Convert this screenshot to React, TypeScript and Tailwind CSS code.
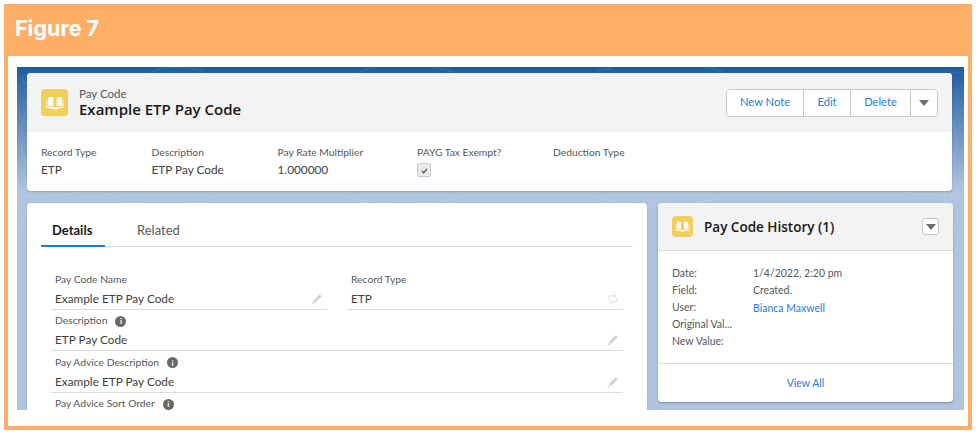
import type { ReactNode } from "react";

const sans = { fontFamily: 'Lato, "Open Sans", sans-serif' };
const heading = { fontFamily: '"Open Sans", sans-serif' };

function BookIcon({ size }: { size: number }) {
  return (
    <svg width={size} height={size} viewBox="0 0 28 28" fill="white">
      <path d="M6 7.5c1.6-.6 3.4-.6 5 0 .6.2 1 .7 1 1.3v9.2c-1.9-.8-4-.9-6-.4V7.5z" />
      <path d="M22 7.5c-1.6-.6-3.4-.6-5 0-.6.2-1 .7-1 1.3v9.2c1.9-.8 4-.9 6-.4V7.5z" />
      <path d="M4 9.5h1v9.2c3-.6 6-.3 9 .8 3-1.1 6-1.4 9-.8V9.5h1v10.4c-2.8-.4-5.4-.1-7.8.7-.2.7-.7 1.1-1.2 1.1h-2c-.5 0-1-.4-1.2-1.1-2.4-.8-5-1.1-7.8-.7V9.5z" />
    </svg>
  );
}

function Caret() {
  return (
    <svg width="10" height="6" viewBox="0 0 10 6" fill="#706e6b">
      <path d="M0 0h10L5 6z" />
    </svg>
  );
}

function Pencil() {
  return (
    <svg width="12" height="12" viewBox="0 0 12 12" fill="#d4d2d0">
      <path d="M8.7 1.2l2.1 2.1-6.9 6.9-2.1-2.1 6.9-6.9zM1.2 9L3 10.8l-2.5.7.7-2.5z" />
    </svg>
  );
}

function SwapIcon() {
  return (
    <svg width="12" height="12" viewBox="0 0 12 12" fill="none" stroke="#e8e8e8" strokeWidth="1.4">
      <path d="M2 7V3h5M7 1l2 2-2 2M10 5v4H5M5 7l-2 2 2 2" />
    </svg>
  );
}

// faint contour lines of the page background
function Contours() {
  return (
    <svg className="absolute inset-0" width="947" height="343" fill="none" stroke="white" strokeOpacity="0.1">
      <path d="M0 20c40-25 70 15 110-5s60-20 100 0 80 15 120-5 90-15 130 5 70 10 120-10 100-10 140 5 90 10 227-5" />
      <path d="M0 125c30 15 60-10 100 5s70 10 110-5 80-5 120 5 90 10 130-5 70-10 120 5 100 10 140-5 90-5 227 5" />
      <path d="M936 10c-20 30 15 50 0 80s-10 60 11 85" />
      <path d="M5 10c15 30-10 50 2 80s5 50-7 80" />
      <path d="M925 130c15 30-8 60 5 95s10 70-5 110" />
    </svg>
  );
}

function InfoDot() {
  return (
    <span className="ml-2 flex h-[11px] w-[11px] items-center justify-center rounded-full bg-[#6b6967] text-[8px] font-bold leading-none text-white">
      i
    </span>
  );
}

function Highlight({ label, value, width, check }: { label: string; value?: string; width: string; check?: boolean }) {
  return (
    <div className={width}>
      <div className="text-[10.3px] leading-[14px] text-[#54585c]">{label}</div>
      {value && <div className="mt-[2px] text-[11.8px] leading-[18px] text-[#3e3e3c]">{value}</div>}
      {check && (
        <div className="mt-[4px] flex h-[14px] w-[14px] items-center justify-center rounded-[2px] border border-[#c9c7c5] bg-[#ecebea]">
          <svg width="9" height="9" viewBox="0 0 10 10" fill="none" stroke="#706e6b" strokeWidth="1.8">
            <path d="M2 5.5l2 2 4-4.5" />
          </svg>
        </div>
      )}
    </div>
  );
}

function Field({ label, value, info, icon, wide }: { label: string; value?: string; info?: boolean; icon?: ReactNode; wide?: boolean }) {
  return (
    <div className={wide ? "col-span-2" : ""}>
      <div className="h-[41.5px] border-b border-[#dddbda] px-1">
        <div className="flex h-[20px] items-center pt-[3px] text-[10.3px] text-[#54585c]">
          {label}
          {info && <InfoDot />}
        </div>
        {value && (
          <div className="flex h-[21px] items-center justify-between text-[11.8px] text-[#3e3e3c]">
            {value}
            {icon}
          </div>
        )}
      </div>
    </div>
  );
}

function HistoryRow({ label, children }: { label: string; children?: ReactNode }) {
  return (
    <div className="flex h-[17px] items-center text-[10.5px] text-[#54585c]">
      <div className="w-[81px] truncate">{label}</div>
      <div>{children}</div>
    </div>
  );
}

export default function App() {
  return (
    <div className="h-[434px] w-[976px] overflow-hidden bg-white pl-1 pt-1" style={sans}>
      <div className="h-[426px] w-[968px] border-x-4 border-b-4 border-[#ffae68] bg-white">
        <div className="-mx-1 flex h-[52px] items-center bg-[#ffae68] pb-1 pl-[11px] text-[21.5px] font-bold text-white" style={{ fontFamily: "Inter, sans-serif" }}>
          Figure 7
        </div>
        <div className="pl-[9px] pt-[11px]">
          <div className="relative h-[343px] w-[947px] overflow-hidden bg-gradient-to-b from-[#1a5c9f] from-0% via-[#b0c4df] via-[36%] to-[#b0c4df] pl-[10px] pt-[6px]">
            <Contours />
            <div className="relative w-[925px] overflow-hidden rounded bg-white shadow-[0_1px_2px_rgba(0,0,0,0.2)]">
              <div className="flex h-[59px] items-center justify-between bg-[#f3f3f3] pl-[14px] pr-[14px]">
                <div className="flex items-center gap-[11px]">
                  <div className="flex h-[27px] w-[27px] items-center justify-center rounded bg-[#f2cf5b]">
                    <BookIcon size={24} />
                  </div>
                  <div>
                    <div className="text-[11.5px] leading-[13px] text-[#54585c]">Pay Code</div>
                    <div className="text-[15px] font-semibold leading-[18px] text-[#181818]" style={heading}>Example ETP Pay Code</div>
                  </div>
                </div>
                <div className="flex h-[28px] items-center rounded border border-[#c9c7c5] bg-white text-[11.2px] text-[#1b7ddb]">
                  <div className="flex h-full w-[77px] items-center justify-center border-r border-[#c9c7c5]">New Note</div>
                  <div className="flex h-full w-[47px] items-center justify-center border-r border-[#c9c7c5]">Edit</div>
                  <div className="flex h-full w-[60px] items-center justify-center border-r border-[#c9c7c5]">Delete</div>
                  <div className="flex h-full w-[26px] items-center justify-center"><Caret /></div>
                </div>
              </div>
              <div className="flex h-[59px] pl-[14px] pt-[13px]">
                <Highlight label="Record Type" value="ETP" width="w-[110.5px]" />
                <Highlight label="Description" value="ETP Pay Code" width="w-[126px]" />
                <Highlight label="Pay Rate Multiplier" value="1.000000" width="w-[139.5px]" />
                <Highlight label="PAYG Tax Exempt?" width="w-[136px]" check />
                <Highlight label="Deduction Type" width="w-[100px]" />
              </div>
            </div>
            <div className="relative mt-3 flex items-start gap-[11px]">
              <div className="h-[220px] w-[620px] rounded bg-white px-[14px] pt-[11px] shadow-[0_1px_2px_rgba(0,0,0,0.2)]">
                <div className="flex h-[33px] w-[592px] border-b border-[#dddbda] text-[13px]">
                  <div className="h-[33px] w-[64px] border-b-2 border-[#1b7ddb] pl-[11px] pt-[7px] font-bold text-[#181818]">Details</div>
                  <div className="pl-[32px] pt-[7px] text-[#54585c]">Related</div>
                </div>
                <div className="mt-[21px] grid w-[582px] grid-cols-[276px_276px] gap-x-5 pl-[10px]">
                  <Field label="Pay Code Name" value="Example ETP Pay Code" icon={<Pencil />} />
                  <Field label="Record Type" value="ETP" icon={<SwapIcon />} />
                  <Field label="Description" value="ETP Pay Code" info wide icon={<Pencil />} />
                  <Field label="Pay Advice Description" value="Example ETP Pay Code" info wide icon={<Pencil />} />
                  <Field label="Pay Advice Sort Order" info wide />
                </div>
              </div>
              <div className="h-[199px] w-[295px] overflow-hidden rounded bg-white shadow-[0_1px_2px_rgba(0,0,0,0.3)]">
                <div className="flex h-[48px] items-center justify-between border-b border-[#dddbda] bg-[#f3f3f3] pl-[14px] pr-[14px]">
                  <div className="flex items-center gap-[11px]">
                    <div className="flex h-[21px] w-[21px] items-center justify-center rounded bg-[#f2cf5b]">
                      <BookIcon size={19} />
                    </div>
                    <div className="pt-[1px] text-[13.5px] font-semibold text-[#181818]" style={heading}>Pay Code History (1)</div>
                  </div>
                  <div className="flex h-[17px] w-[17px] items-center justify-center rounded-[3px] border border-[#c9c7c5] bg-white"><Caret /></div>
                </div>
                <div className="h-[113px] border-b border-[#dddbda] pl-[14px] pt-[14px]">
                  <HistoryRow label="Date:">1/4/2022, 2:20 pm</HistoryRow>
                  <HistoryRow label="Field:">Created.</HistoryRow>
                  <HistoryRow label="User:"><span className="relative top-[1px] text-[#1b7ddb]">Bianca Maxwell</span></HistoryRow>
                  <HistoryRow label="Original Val..." />
                  <HistoryRow label="New Value:" />
                </div>
                <div className="flex h-[38px] items-center justify-center pt-[1px] text-[10.5px] text-[#1b7ddb]">View All</div>
              </div>
            </div>
          </div>
        </div>
      </div>
    </div>
  );
}
